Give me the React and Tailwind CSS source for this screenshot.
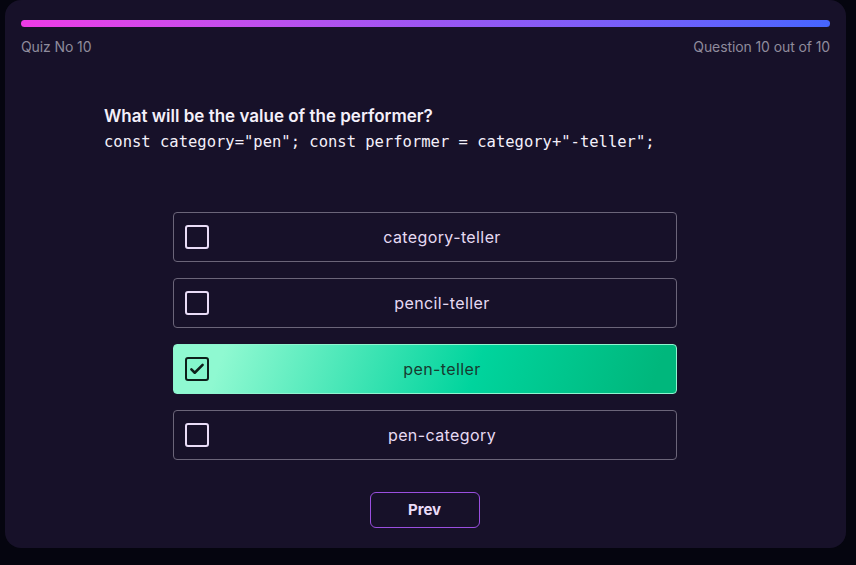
import React, { useState } from "react";

const options = ["category-teller", "pencil-teller", "pen-teller", "pen-category"];

function CheckBox({ checked }) {
  if (checked) {
    return (
      <span className="flex h-6 w-6 shrink-0 items-center justify-center rounded-[3px] border-2 border-[#0d1f1a] bg-[#84f6cc]">
        <svg viewBox="0 0 24 24" className="h-[18px] w-[18px]" fill="none" stroke="#0d1f1a" strokeWidth="3.4" strokeLinecap="round" strokeLinejoin="round">
          <path d="M4.5 12.5l4.5 4.5L19.5 6.5" />
        </svg>
      </span>
    );
  }
  return <span className="h-6 w-6 shrink-0 rounded-[3px] border-2 border-[#e9dcf7]" />;
}

export default function App() {
  const [selected, setSelected] = useState(2);

  return (
    <div className="min-h-screen bg-[#05050f] pl-[5px] pr-[10px] pb-[17px] font-['Inter',sans-serif]">
      <div className="h-[548px] rounded-2xl bg-[#171129] px-4 pt-5">
        <div className="h-[7px] rounded-full bg-gradient-to-r from-[#ee3ae6] via-[#9c55f2] to-[#4565ff]" />
        <div className="mt-[9px] flex justify-between text-[14px] tracking-[-0.1px] text-[#8f8b9c]">
          <span>Quiz No 10</span>
          <span>Question 10 out of 10</span>
        </div>

        <div className="ml-[83px] mt-[47px]">
          <p className="text-[17px] font-semibold leading-6 text-[#f4f0fa]">What will be the value of the performer?</p>
          <p className="mt-[2px] font-['DejaVu_Sans_Mono',monospace] text-[15.5px] leading-6 text-[#f4f0fa]">
            const category="pen"; const performer = category+"-teller";
          </p>
        </div>

        <div className="mx-auto mt-[58px] flex w-[504px] -translate-x-px flex-col gap-4">
          {options.map((opt, i) => {
            const on = selected === i;
            return (
              <button
                key={opt}
                onClick={() => setSelected(i)}
                className={`flex h-[50px] items-center rounded-[4px] border pl-[11px] ${
                  on
                    ? "border-[#8ff5cf] bg-linear-[110deg] from-[#8ff9d1] from-10% via-[#00d49d] via-60% to-[#00b77c] to-95% text-[#173a30]"
                    : "border-[#6b6579] text-[#e6daf3]"
                }`}
              >
                <CheckBox checked={on} />
                <span className="flex-1 text-center text-[16px] tracking-[0.4px]">{opt}</span>
              </button>
            );
          })}
        </div>

        <div className="mt-8 flex justify-center">
          <button className="h-[36px] w-[110px] -translate-x-px rounded-md border border-[#9a4fe0] text-[15px] font-bold text-[#eadcf8]">
            Prev
          </button>
        </div>
      </div>
    </div>
  );
}
